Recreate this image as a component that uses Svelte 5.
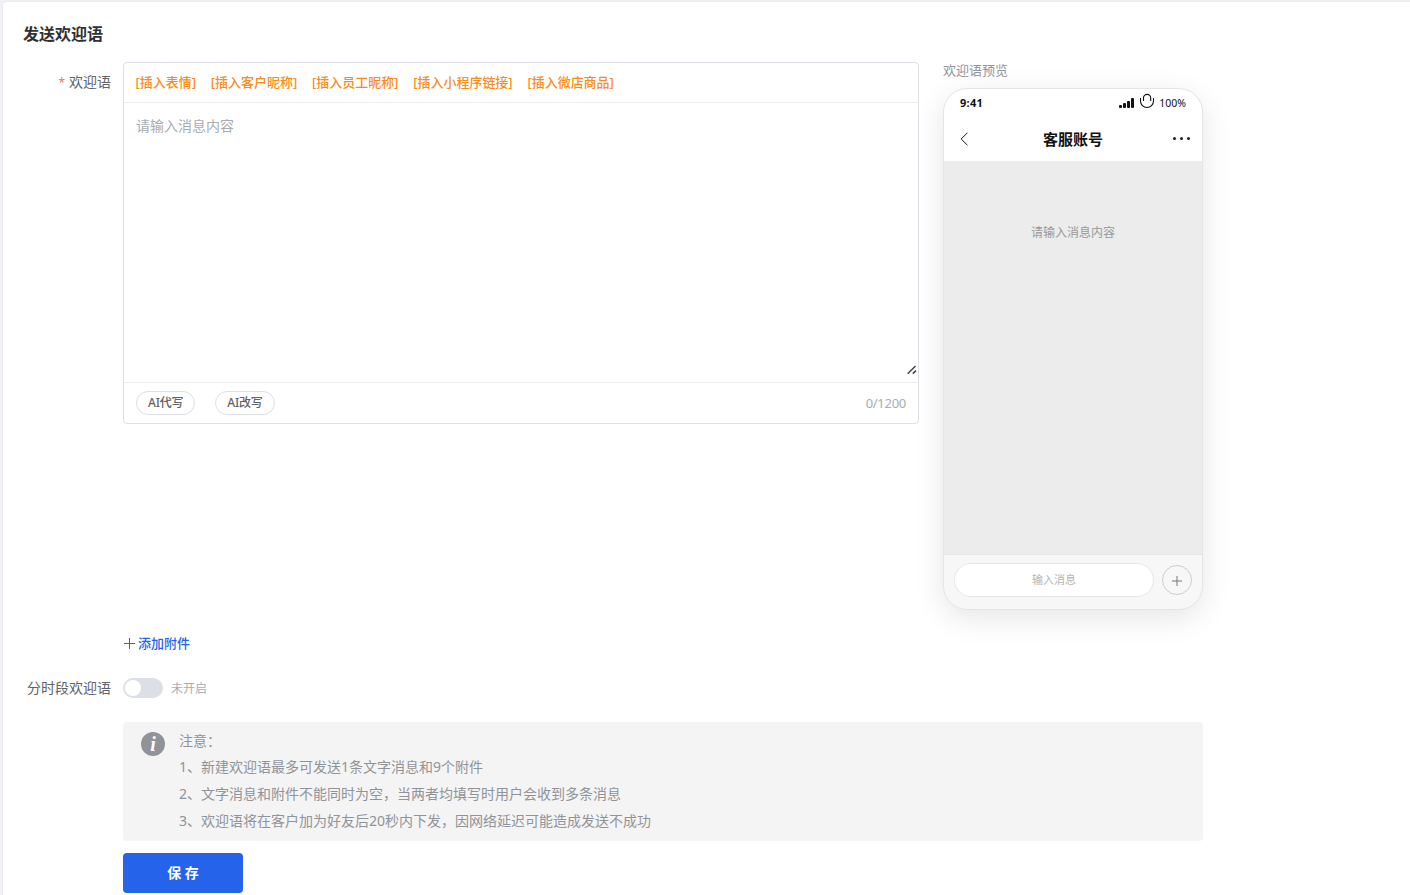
<script lang="ts">
	const maxLength = 1200;

	const inserts = ['插入表情', '插入客户昵称', '插入员工昵称', '插入小程序链接', '插入微店商品'];

	const aiActions = ['AI代写', 'AI改写'];

	const notes = [
		'新建欢迎语最多可发送1条文字消息和9个附件',
		'文字消息和附件不能同时为空，当两者均填写时用户会收到多条消息',
		'欢迎语将在客户加为好友后20秒内下发，因网络延迟可能造成发送不成功'
	];

	let message = $state('');
	let periodEnabled = $state(false);

	const insertToken = (token: string) => {
		message = `${message}[${token}]`.slice(0, maxLength);
	};
</script>

<main class="panel">
	<h1>发送欢迎语</h1>

	<div class="row welcome">
		<div class="label first"><span class="required">*</span>欢迎语</div>

		<div class="left">
			<div class="editor">
				<div class="toolbar">
					{#each inserts as item}
						<button type="button" class="insert" onclick={() => insertToken(item)}>[{item}]</button>
					{/each}
				</div>
				<div class="field">
					<textarea placeholder="请输入消息内容" maxlength={maxLength} bind:value={message}></textarea>
					<svg class="grip" width="10" height="10" viewBox="0 0 10 10">
						<path d="M.7 8.8 8.5 1M5.8 8.6 9 5.6" />
					</svg>
				</div>
				<div class="actions">
					{#each aiActions as action}
						<button type="button" class="ai">{action}</button>
					{/each}
					<span class="count">{message.length}/{maxLength}</span>
				</div>
			</div>

			<button type="button" class="attach">
				<svg width="12" height="12" viewBox="0 0 12 12"><path d="M6.5 1v11M1 6.5h11" /></svg>
				<span>添加附件</span>
			</button>
		</div>

		<aside class="preview">
			<div class="caption">欢迎语预览</div>
			<div class="phone">
				<div class="status">
					<b>9:41</b>
					<svg class="signal" width="16" height="10" viewBox="0 0 16 10">
						<rect x="0" y="7" width="3" height="3" rx="1" />
						<rect x="4" y="5" width="3" height="5" rx="1" />
						<rect x="8" y="3" width="3" height="7" rx="1" />
						<rect x="12" y="0" width="3" height="10" rx="1" />
					</svg>
					<svg class="mic" width="16" height="16" viewBox="0 0 16 16">
						<path d="M1.5 5v3a6.5 6.5 0 0 0 13 0V5" />
						<path d="M4.5 8V5a3.6 3.6 0 0 1 7.2 0v3" />
					</svg>
					<span class="battery">100%</span>
				</div>
				<div class="nav">
					<svg width="8" height="14" viewBox="0 0 8 14"><path d="M7.4.8 1.2 7l6.2 6.2" /></svg>
					<strong>客服账号</strong>
					<span class="dots"><i></i><i></i><i></i></span>
				</div>
				<div class="chat">{message || '请输入消息内容'}</div>
				<div class="compose">
					<div class="pill">输入消息</div>
					<div class="plus">
						<svg width="10" height="10" viewBox="0 0 10 10"><path d="M5 0v10M0 5h10" /></svg>
					</div>
				</div>
			</div>
		</aside>
	</div>

	<div class="row period">
		<div class="label">分时段欢迎语</div>
		<button
			type="button"
			class="switch"
			class:on={periodEnabled}
			role="switch"
			aria-checked={periodEnabled}
			aria-label="分时段欢迎语"
			onclick={() => (periodEnabled = !periodEnabled)}
		></button>
		<span class="state">{periodEnabled ? '已开启' : '未开启'}</span>
	</div>

	<section class="notice">
		<div class="info">i</div>
		<div class="notes">
			<p class="head">注意：</p>
			{#each notes as note, i}
				<p>{i + 1}、{note}</p>
			{/each}
		</div>
	</section>

	<button type="button" class="save">保 存</button>
</main>

<style>
	:global(body) {
		margin: 0;
		background: #f0f2f5;
		overflow: hidden;
	}

	.panel {
		box-sizing: border-box;
		height: 893px;
		margin: 2px 0 0 3px;
		padding: 20px 0 0 20px;
		background: #fff;
		box-shadow: 0 0 1px 1px #e9ebf1;
		border-top-left-radius: 4px;
		font-family: 'Noto Sans', 'Noto Sans CJK SC', sans-serif;
		font-size: 14px;
		color: #606266;
	}

	button {
		margin: 0;
		padding: 0;
		border: 0;
		background: none;
		font: inherit;
		cursor: pointer;
	}

	svg {
		display: block;
		flex: none;
		fill: none;
		stroke: currentColor;
	}

	h1 {
		margin: 0;
		height: 24px;
		line-height: 24px;
		font-size: 16px;
		font-weight: 700;
		color: #303133;
	}

	.row {
		display: flex;
	}

	.welcome {
		margin-top: 16px;
	}

	.label {
		width: 88px;
		margin-right: 12px;
		text-align: right;
		line-height: 20px;
	}

	.label.first {
		line-height: 40px;
	}

	.required {
		margin-right: 4px;
		font-size: 12px;
		color: #f56c6c;
	}

	.editor {
		box-sizing: border-box;
		width: 796px;
		height: 362px;
		border: 1px solid #dcdfe6;
		border-radius: 4px;
	}

	.toolbar {
		display: flex;
		gap: 14.9px;
		height: 39px;
		padding-left: 11.5px;
		border-bottom: 1px solid #ebeef5;
	}

	.insert {
		padding-bottom: 2px;
		font-size: 13px;
		font-weight: 500;
		letter-spacing: -0.03px;
		color: #fa8c16;
		white-space: nowrap;
	}

	.field {
		position: relative;
		height: 279px;
		border-bottom: 1px solid #ebeef5;
	}

	textarea {
		display: block;
		box-sizing: border-box;
		width: 100%;
		height: 279px;
		padding: 12px;
		border: 0;
		outline: none;
		resize: none;
		font: inherit;
		line-height: 22px;
		color: #606266;
	}

	textarea::placeholder {
		color: #a8abb2;
	}

	.grip {
		position: absolute;
		right: 1px;
		bottom: 7px;
		color: #444;
		stroke-width: 1.5;
	}

	.actions {
		display: flex;
		align-items: center;
		gap: 20px;
		height: 40px;
		padding: 0 12px;
	}

	.ai {
		box-sizing: border-box;
		height: 24px;
		padding: 0 11px;
		border: 1px solid #dcdfe6;
		border-radius: 12px;
		line-height: 20px;
		font-size: 12px;
		font-weight: 500;
		letter-spacing: -0.2px;
		color: #606266;
	}

	.count {
		margin-left: auto;
		font-size: 13px;
		letter-spacing: -0.28px;
		color: #a8abb2;
	}

	.attach {
		display: flex;
		align-items: center;
		gap: 3px;
		height: 20px;
		margin-top: 209px;
		font-size: 13px;
		font-weight: 500;
		color: #2563eb;
	}

	.attach span {
		padding-bottom: 2px;
	}

	.preview {
		margin-left: 24px;
	}

	.caption {
		height: 26px;
		line-height: 16px;
		font-size: 13px;
		color: #909399;
	}

	.phone {
		display: flex;
		flex-direction: column;
		box-sizing: border-box;
		width: 260px;
		height: 522px;
		overflow: hidden;
		border: 1px solid #e5e5e5;
		border-radius: 24px;
		background: #ececec;
		box-shadow: 0 8px 30px rgba(0, 0, 0, 0.1);
	}

	.status {
		display: flex;
		align-items: center;
		height: 28px;
		padding: 0 16px;
		background: #fff;
		font-size: 10.5px;
		color: #111;
	}

	.status b {
		padding-bottom: 2px;
		font-size: 11px;
		letter-spacing: 0.3px;
	}

	.signal {
		margin-left: auto;
		fill: currentColor;
		stroke: none;
	}

	.mic {
		margin: -4px 4px 0 4px;
		stroke-width: 1.1;
	}

	.nav {
		display: flex;
		align-items: center;
		justify-content: space-between;
		height: 44px;
		padding: 0 12px 0 16px;
		background: #fff;
		color: #111;
	}

	.nav strong {
		padding: 0 0 2px 5px;
		font-size: 15px;
	}

	.dots {
		display: flex;
		gap: 4px;
		padding-bottom: 1px;
	}

	.dots i {
		width: 3px;
		height: 3px;
		border-radius: 50%;
		background: #222;
	}

	.chat {
		flex: 1;
		padding-top: 63px;
		line-height: 18px;
		text-align: center;
		font-size: 12px;
		color: #999;
	}

	.compose {
		display: flex;
		align-items: center;
		gap: 8px;
		box-sizing: border-box;
		height: 55px;
		padding: 0 10px 5px;
		border-top: 1px solid #e5e5e5;
		background: #f7f7f7;
	}

	.pill {
		box-sizing: border-box;
		width: 200px;
		height: 34px;
		border: 1px solid #e5e5e5;
		border-radius: 17px;
		background: #fff;
		line-height: 31px;
		text-align: center;
		font-size: 11px;
		color: #b4b4b4;
	}

	.plus {
		display: flex;
		align-items: center;
		justify-content: center;
		box-sizing: border-box;
		width: 30px;
		height: 30px;
		padding-top: 2px;
		border: 1px solid #ccc;
		border-radius: 50%;
		color: #777;
	}

	.period {
		align-items: center;
		height: 20px;
		margin-top: 25px;
	}

	.switch {
		width: 40px;
		height: 20px;
		padding: 2px;
		border-radius: 10px;
		background: #dcdfe6;
	}

	.switch::before {
		content: '';
		display: block;
		width: 16px;
		height: 16px;
		border-radius: 50%;
		background: #fff;
	}

	.switch.on {
		background: #2563eb;
	}

	.switch.on::before {
		margin-left: auto;
	}

	.state {
		margin-left: 8px;
		font-size: 12px;
		color: #a8abb2;
	}

	.notice {
		display: flex;
		gap: 14px;
		box-sizing: border-box;
		width: 1080px;
		height: 119px;
		margin: 24px 0 0 100px;
		padding: 6px 18px;
		border-radius: 4px;
		background: #f4f4f4;
		color: #909399;
	}

	.info {
		width: 24px;
		height: 24px;
		margin-top: 4px;
		border-radius: 50%;
		background: #909399;
		text-align: center;
		font: italic bold 20px/25px 'Liberation Serif', serif;
		color: #fff;
	}

	.notes p {
		margin: 0;
		line-height: 27px;
	}

	.notes .head {
		height: 25px;
		line-height: 26px;
	}

	.save {
		display: block;
		width: 120px;
		height: 40px;
		margin: 12px 0 0 100px;
		padding-bottom: 2px;
		border-radius: 4px;
		background: #2563eb;
		font-size: 14px;
		font-weight: 700;
		color: #fff;
	}
</style>
